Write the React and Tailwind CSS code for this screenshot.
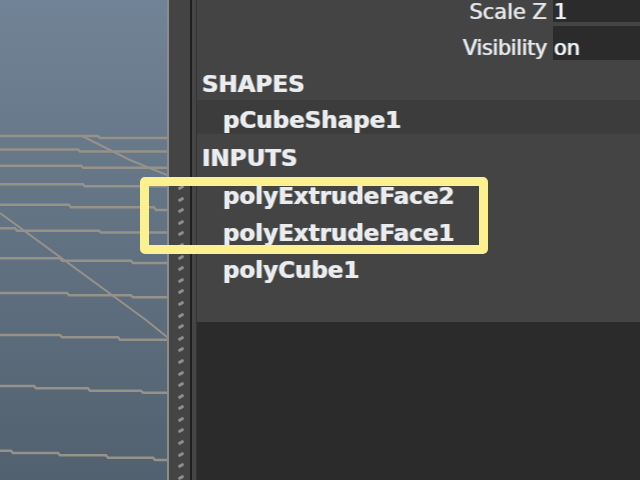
import React from "react";

// horizontal floor lines, stepped like the aliased lines in the viewport
const gridLines = [
  "0,136 98,136 100,138 167,138",
  "0,149.5 78,149.5 80,151.5 167,151.5",
  "0,165.7 81,165.7 83,167.7 167,167.7",
  "0,184.3 83,184.3 85,186.3 167,186.3",
  "0,204.7 69,204.7 71,207.3 154,207.3 156,210 167,210",
  "0,228.3 15,228.3 17,230.7 99,230.7 101,232.5 167,232.5",
  "0,258.3 60,258.3 62,260.7 131,260.7 133,263 167,263",
  "0,293 67,293 69,295.3 131,295.3 133,297.3 167,297.3",
  "0,335 60,335 62,337.3 118,337.3 120,339.7 167,339.7",
  "0,386 34,386 36,388.3 88,388.3 90,390.7 141,390.7 143,392.7 167,392.7",
  "0,450.7 11,450.7 13,453 58,453 60,455.3 106,455.3 108,457.7 153,457.7 155,460 167,460",
];

const gripDots = Array.from({ length: 26 }, (_, i) => i);

const textGlow = "[text-shadow:-1px_0_0_#5f9bd6,1px_0_0_#b5824f] blur-[0.4px]";

function Viewport() {
  return (
    <div className="w-[167px] h-full shrink-0 bg-gradient-to-b from-[#718396] to-[#52616f]">
      <svg width="167" height="480" className="blur-[0.5px]">
        {gridLines.map((points) => (
          <polyline key={points} points={points} fill="none" stroke="#969189" strokeWidth="2.5" />
        ))}
        <polyline points="82,136 130,160 167,175" fill="none" stroke="#969189" strokeWidth="2" />
        <polyline points="0,213 146,320 167,337" fill="none" stroke="#969189" strokeWidth="2" />
      </svg>
    </div>
  );
}

function Splitter() {
  return (
    <div className="flex h-full shrink-0">
      <div className="w-[2px] bg-[#8c8c8c]" />
      <div className="w-[21px] bg-[#444444] flex flex-col items-center pt-[186px] gap-[8.6px] overflow-hidden">
        {gripDots.map((i) => (
          <div key={i} className="w-[6px] h-[3px] shrink-0 ml-[3px] rounded-[1px] bg-[#8e8e8e] -rotate-30 blur-[0.5px]" />
        ))}
      </div>
      <div className="w-[2px] bg-[#1f1f1f]" />
      <div className="w-[5px] bg-[#454545] border-r border-[#333333]" />
    </div>
  );
}

function AttrRow({ label, value, className, textClass, labelClass }) {
  return (
    <div className={`flex items-stretch gap-[6px] ${className}`}>
      <div className="w-[350px] flex items-center justify-end">
        <span className={`text-[#e6e6e6] text-[21px] leading-none whitespace-nowrap ${textGlow} ${textClass} ${labelClass}`}>{label}</span>
      </div>
      <div className="flex-1 bg-[#2b2b2b] flex items-center pl-[1px]">
        <span className={`text-[#f0f0f0] text-[21px] leading-none ${textGlow} ${textClass}`}>{value}</span>
      </div>
    </div>
  );
}

function ListRow({ children, indent, className }) {
  return (
    <div className={`flex items-center ${indent ? "pl-[26px]" : "pl-[5px]"} ${className}`}>
      <span className={`font-bold text-[#ececec] text-[23px] leading-none ${textGlow}`}>{children}</span>
    </div>
  );
}

function ChannelPanel() {
  return (
    <div className="flex-1 h-full flex flex-col bg-[#2b2b2b] min-w-0">
      <div className="h-[322px] bg-[#444444] flex flex-col">
        <AttrRow label="Scale Z" value="1" className="h-[22px]" textClass="translate-y-[0.5px]" labelClass="" />
        <AttrRow label="Visibility" value="on" className="h-[34px] mt-[4px]" textClass="translate-y-[5px]" labelClass="tracking-[-0.4px]" />
        <div className="h-[7px]" />
        <ListRow className="h-[33px] pt-[1px]">SHAPES</ListRow>
        <ListRow indent className="h-[34px] pt-[6px] bg-[#3c3c3c]">pCubeShape1</ListRow>
        <ListRow className="h-[44px] pt-[4px]">INPUTS</ListRow>
        <ListRow indent className="h-[37px]">polyExtrudeFace2</ListRow>
        <ListRow indent className="h-[37px]">polyExtrudeFace1</ListRow>
        <ListRow indent className="h-[37px]">polyCube1</ListRow>
      </div>
    </div>
  );
}

export default function App() {
  return (
    <div className="relative w-[640px] h-[480px] flex overflow-hidden font-['DejaVu_Sans',sans-serif]">
      <Viewport />
      <Splitter />
      <ChannelPanel />
      {/* yellow callout box drawn over the screenshot */}
      <div className="absolute left-[140px] top-[177px] w-[348px] h-[77px] border-[9px] border-[#fdf08e] rounded-[5px]" />
    </div>
  );
}
